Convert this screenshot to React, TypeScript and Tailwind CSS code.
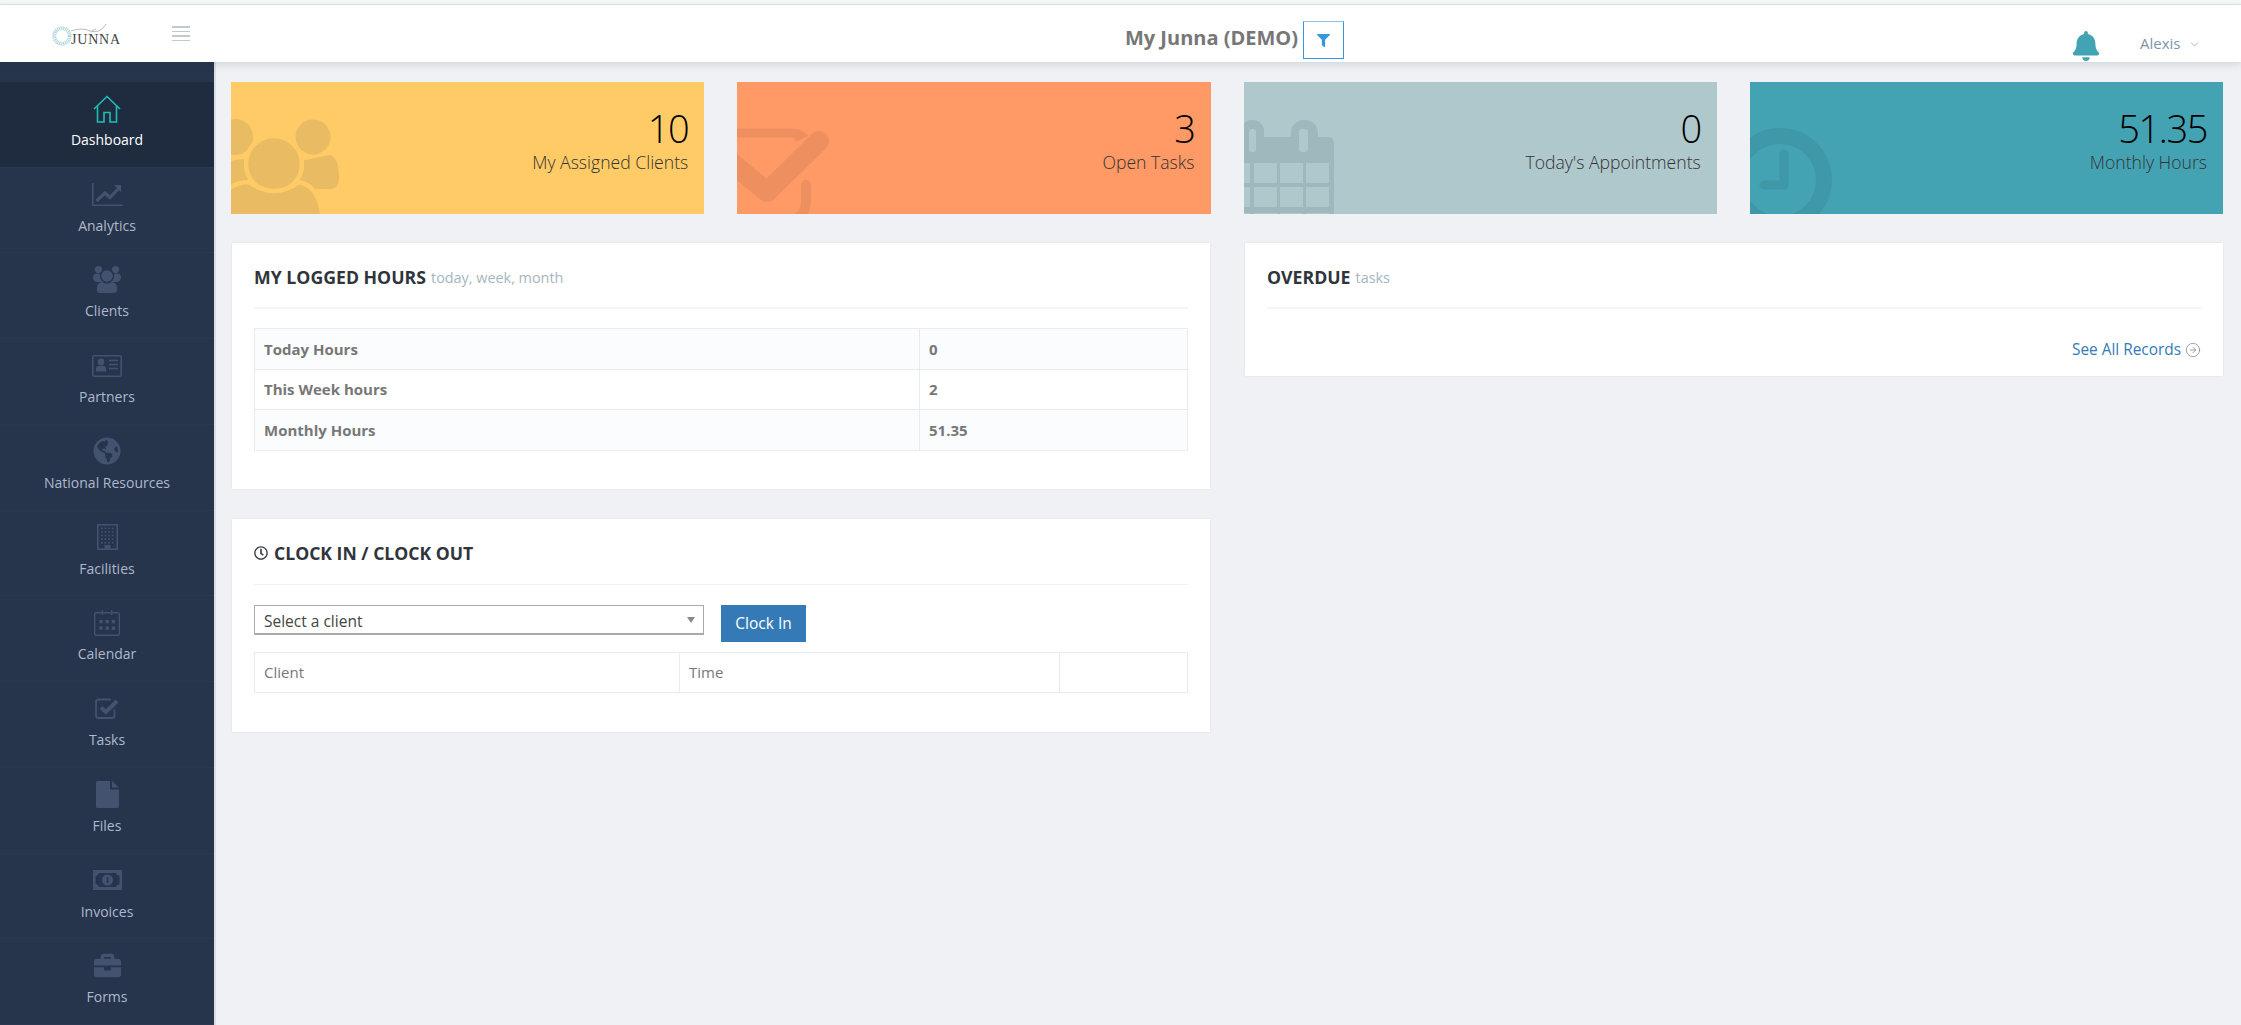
import React from 'react';
import { FaBell, FaBriefcase, FaFilter, FaGlobeAmericas, FaRegClock } from 'react-icons/fa';
import { ChevronDown, CircleArrowRight } from 'lucide-react';

const HomeIcon = () => (
  <svg width="28" height="28" viewBox="0 0 28 28" fill="none" stroke="#1fbcb6" strokeWidth="1.6">
    <path d="M1 14 L14 1.5 L27 14" />
    <path d="M4.5 11 V27 H11 V17.5 H17 V27 H23.5 V11" />
  </svg>
);

const ChartIcon = () => (
  <svg width="31" height="23" viewBox="0 0 31 23" fill="none" stroke="#43526e">
    <path d="M0.8 0 V22.2 H30.5" strokeWidth="1.6" />
    <path d="M4.5 18 L13 10 L18 14.5 L26.5 5.5" strokeWidth="3.2" />
    <path d="M22 2 H29 V9 Z" fill="#43526e" stroke="none" />
  </svg>
);

const UsersIcon = () => (
  <svg width="28" height="27" viewBox="0 0 28 27" fill="#43526e">
    <circle cx="5.5" cy="3.6" r="3.6" />
    <circle cx="22.5" cy="3.6" r="3.6" />
    <circle cx="4" cy="11.5" r="4" />
    <circle cx="24" cy="11.5" r="4" />
    <rect x="2" y="11" width="24" height="5" rx="2.5" />
    <circle cx="14" cy="10" r="6.5" stroke="#26344c" strokeWidth="1.4" />
    <path d="M4 22 Q4 16.5 9.5 16 Q14 19 18.5 16 Q24 16.5 24 22 V24 Q24 27 21 27 H7 Q4 27 4 24 Z" />
  </svg>
);

const CardIcon = () => (
  <svg width="30" height="22" viewBox="0 0 30 22" fill="#43526e">
    <rect x="0.8" y="0.8" width="28.4" height="20.4" rx="1.5" fill="none" stroke="#43526e" strokeWidth="1.6" />
    <circle cx="9" cy="7" r="3.4" />
    <path d="M4 16.5 V13.5 Q4 11 6.5 11 H11.5 Q14 11 14 13.5 V16.5 Z" />
    <path d="M17 5.5 H26 M17 9.5 H26 M17 13.5 H26" stroke="#43526e" strokeWidth="1.4" />
  </svg>
);

const BuildingIcon = () => {
  const dots = [];
  for (let r = 0; r < 5; r++) {
    for (let c = 0; c < 4; c++) {
      dots.push(<rect key={`${r}-${c}`} x={4 + c * 3.6} y={3.5 + r * 3.6} width="1.7" height="1.7" />);
    }
  }
  return (
    <svg width="21" height="26" viewBox="0 0 21 26" fill="#43526e">
      <rect x="0.8" y="0.8" width="19.4" height="24.4" fill="none" stroke="#43526e" strokeWidth="1.6" />
      {dots}
      <rect x="7.5" y="21" width="6" height="4.5" />
    </svg>
  );
};

const CalendarIcon = () => {
  const dots = [];
  for (let r = 0; r < 2; r++) {
    for (let c = 0; c < 3; c++) {
      dots.push(<rect key={`${r}-${c}`} x={5.3 + c * 6.2} y={10 + r * 6.4} width="3.4" height="3.4" />);
    }
  }
  return (
    <svg width="26" height="26" viewBox="0 0 26 26" fill="#43526e">
      <rect x="0.7" y="2.7" width="24.6" height="22.6" rx="1.5" fill="none" stroke="#43526e" strokeWidth="1.4" />
      <path d="M8.3 0 V5 M17.7 0 V5" stroke="#43526e" strokeWidth="1.2" />
      {dots}
    </svg>
  );
};

const TasksIcon = () => (
  <svg width="25" height="21" viewBox="0 0 25 21" fill="none" stroke="#43526e">
    <path d="M19.5 11.5 V17.5 Q19.5 20 17 20 H3.5 Q1 20 1 17.5 V4 Q1 1.5 3.5 1.5 H16" strokeWidth="1.8" />
    <path d="M6 9.5 L11 14 L22 3" strokeWidth="4" />
  </svg>
);

const FileIcon = () => (
  <svg width="23" height="27" viewBox="0 0 23 27" fill="#43526e">
    <path d="M1.5 0 H14 V8.5 H23 V25.5 Q23 27 21.5 27 H1.5 Q0 27 0 25.5 V1.5 Q0 0 1.5 0 Z" />
    <path d="M16 0 L23 6.5 H16 Z" />
  </svg>
);

const MoneyIcon = () => (
  <svg width="29" height="20" viewBox="0 0 29 20" fill="#43526e">
    <rect width="29" height="20" />
    <path d="M6 3 H23 Q23.5 5.5 26.5 6 V14 Q23.5 14.5 23 17 H6 Q5.5 14.5 2.5 14 V6 Q5.5 5.5 6 3 Z" fill="#26344c" />
    <circle cx="14.5" cy="10" r="5.5" />
    <rect x="13.8" y="7" width="1.6" height="6" fill="#26344c" />
  </svg>
);

const BigUsers = () => (
  <svg className="absolute left-0 top-0" width="120" height="132" viewBox="0 0 120 132" fill="#e9bb62" stroke="#ffcb66">
    <circle cx="4" cy="55" r="18" stroke="none" />
    <circle cx="82" cy="55" r="17.5" stroke="none" />
    <path d="M65 80 Q80 77 98 73 Q108 74 108 97 Q108 107 98 107 H60 Z" stroke="none" />
    <path d="M-20 90 Q0 74 20 78 L40 100 L-20 110 Z" stroke="none" />
    <circle cx="43" cy="82" r="28" strokeWidth="4.5" />
    <path d="M-15 140 V118 Q0 100 18 100 Q43 118 68 100 Q90 104 92 140 Z" strokeWidth="4.5" />
  </svg>
);

const BigCheck = () => (
  <svg className="absolute left-0 top-0" width="120" height="132" viewBox="0 0 120 132" fill="none" stroke="#ee8f60">
    <path d="M-6 51 H50 Q60 51 63 53 L57 56" strokeWidth="9" />
    <path d="M-5 81 L30 110 L82 59" strokeWidth="20" strokeLinejoin="round" strokeLinecap="round" />
    <path d="M69 103 V120 Q69 136 50 140" strokeWidth="10" strokeLinecap="round" />
  </svg>
);

const BigCalendar = () => {
  const xs = [-20, 10, 36, 62];
  const ys = [81, 105, 131];
  return (
    <svg className="absolute left-0 top-0" width="120" height="132" viewBox="0 0 120 132" fill="#9fb8bd">
      <path d="M-10 55 H84 Q90 55 90 62 V132 H-10 Z" />
      <rect x="-3" y="38" width="23" height="36" rx="11" />
      <rect x="47" y="38" width="27" height="36" rx="13" />
      <rect x="5" y="47" width="7" height="23" rx="3" fill="#afc8cc" />
      <rect x="55" y="47" width="9" height="23" rx="3" fill="#afc8cc" />
      {ys.map((y) =>
        xs.map((x) => <rect key={`${x}-${y}`} x={x} y={y} width={x === -20 ? 26 : 23} height="20" fill="#afc8cc" />)
      )}
    </svg>
  );
};

const BigClock = () => (
  <svg className="absolute left-0 top-0" width="120" height="132" viewBox="0 0 120 132" fill="none">
    <circle cx="30" cy="98" r="44" stroke="#3f98a8" strokeWidth="16" />
    <path d="M14 103 H34 V72" stroke="#3f98a8" strokeWidth="9" strokeLinejoin="round" strokeLinecap="round" />
  </svg>
);

const Logo = () => (
  <div className="relative ml-[52px] mt-[5px] flex w-[120px] items-center">
    <svg width="20" height="20" viewBox="0 0 20 20" fill="none" stroke="#b5d9dd">
      <circle cx="10" cy="10" r="7.5" strokeWidth="3.6" strokeDasharray="1.2 0.7" />
      <circle cx="10" cy="10" r="9.3" strokeWidth="1.2" strokeDasharray="0.8 1.2" />
    </svg>
    <span className="ml-[-1px] mt-[8px] font-['Liberation_Serif',serif] text-[14px] leading-none tracking-[0.8px] text-[#444]">
      JUNNA
    </span>
    <svg className="absolute left-[18px] top-[-1px]" width="38" height="10" viewBox="0 0 38 10" fill="none" stroke="#777" strokeWidth="0.5">
      <path d="M1 7 Q12 3 20 7 Q30 10 36 0 M26 5 L22 7" />
    </svg>
  </div>
);

const navItems = [
  { label: 'Dashboard', icon: <HomeIcon />, active: true },
  { label: 'Analytics', icon: <ChartIcon /> },
  { label: 'Clients', icon: <UsersIcon /> },
  { label: 'Partners', icon: <CardIcon /> },
  { label: 'National Resources', icon: <FaGlobeAmericas size={28} color="#43526e" /> },
  { label: 'Facilities', icon: <BuildingIcon /> },
  { label: 'Calendar', icon: <CalendarIcon /> },
  { label: 'Tasks', icon: <TasksIcon /> },
  { label: 'Files', icon: <FileIcon /> },
  { label: 'Invoices', icon: <MoneyIcon /> },
  { label: 'Forms', icon: <FaBriefcase size={27} color="#43526e" /> },
];

const stats = [
  { value: '10', label: 'My Assigned Clients', bg: 'bg-[#ffcb66]', icon: <BigUsers /> },
  { value: '3', label: 'Open Tasks', bg: 'bg-[#ff9966]', icon: <BigCheck /> },
  { value: '0', label: "Today's Appointments", bg: 'bg-[#afc8cc]', icon: <BigCalendar /> },
  { value: '51.35', label: 'Monthly Hours', bg: 'bg-[#43a3b3]', icon: <BigClock /> },
];

const hours = [
  ['Today Hours', '0'],
  ['This Week hours', '2'],
  ['Monthly Hours', '51.35'],
];

export default function App() {
  return (
    <div className="flex h-[1025px] w-full flex-col overflow-hidden bg-[#eff1f5] font-['Open_Sans',sans-serif]">
      <div className="h-[5px] shrink-0 border-b border-[#d8ebe6] bg-[#f3faf8]" />

      {/* top bar */}
      <header className="relative z-10 flex h-[57px] shrink-0 items-center bg-white shadow-[0_2px_8px_rgba(40,50,70,0.16)]">
        <div className="flex w-[398px] items-center">
          <Logo />
          <div className="flex h-[15px] w-[18px] flex-col justify-between">
            <div className="h-[1.5px] bg-[#c3c7cf]" />
            <div className="h-[1.5px] bg-[#c3c7cf]" />
            <div className="h-[1.5px] bg-[#c3c7cf]" />
            <div className="h-[1.5px] bg-[#c3c7cf]" />
          </div>
        </div>
        <div className="mt-[9px] flex flex-1 items-center justify-center">
          <span className="text-[20px] font-bold leading-none text-[#777]">My Junna (DEMO)</span>
          <div className="ml-[5px] mt-[4px] flex h-[38px] w-[41px] items-center justify-center border border-[#3598dc] border-t-[#8fc5ea]">
            <FaFilter size={13} color="#3598dc" />
          </div>
        </div>
        <div className="flex w-[170px] items-center">
          <FaBell size={30} color="#42a3b3" className="mt-[24px]" />
          <span className="ml-[39px] mt-[20px] text-[15px] text-[#8093ab]">Alexis</span>
          <ChevronDown size={13} strokeWidth={1.2} color="#8093ab" className="ml-[8px] mt-[21px]" />
        </div>
      </header>

      <div className="flex min-h-0 flex-1">
        {/* sidebar */}
        <aside className="flex w-[216px] shrink-0 flex-col border-r-2 border-[#d9dfe9] bg-[#26344c] pt-[20px]">
          {navItems.map((item) => (
            <div
              key={item.label}
              className={`flex flex-1 flex-col items-center border-b border-[#2a3852] pt-[12px] ${item.active ? 'bg-[#1f2c3f]' : ''}`}
            >
              <div className="flex h-[29px] items-center justify-center">{item.icon}</div>
              <span className={`mt-[6px] text-[14px] font-normal leading-[22px] ${item.active ? 'text-white' : 'text-[#aeb9cc]'}`}>
                {item.label}
              </span>
            </div>
          ))}
        </aside>

        <main className="min-w-0 flex-1 pl-[15px] pr-[18px] pt-[20px]">
          {/* stat cards */}
          <div className="grid grid-cols-4 gap-[33px]">
            {stats.map((s) => (
              <div key={s.label} className={`relative h-[132px] overflow-hidden pr-[16px] pt-[22px] text-right ${s.bg}`}>
                {s.icon}
                <div className="relative text-[38px] font-light leading-[48px] tracking-[-1.4px] text-black">{s.value}</div>
                <div className="relative mt-[-2px] text-[17.6px] font-light leading-[24px] text-[#333]">{s.label}</div>
              </div>
            ))}
          </div>

          <div className="mt-[29px] grid grid-cols-2 items-start gap-[35px] pl-px">
            <div className="flex flex-col gap-[30px]">
              {/* logged hours */}
              <section className="bg-white px-[22px] pb-[38px] pt-[20px] shadow-[0_0_2px_rgba(40,50,70,0.1)]">
                <div className="flex h-[46px] items-start border-b-2 border-[#f4f5f7]">
                  <h2 className="text-[17.7px] font-bold leading-[28px] text-[#2f353b]">MY LOGGED HOURS</h2>
                  <span className="ml-[5px] mt-[1px] text-[14.4px] leading-[28px] text-[#a6b5c0]">today, week, month</span>
                </div>
                <table className="mt-[19px] w-full table-fixed border-collapse text-[15px] font-bold text-[#777]">
                  <tbody>
                    {hours.map(([k, v], i) => (
                      <tr key={k} className={`h-[40.7px] ${i % 2 === 0 ? 'bg-[#fbfcfd]' : 'bg-white'}`}>
                        <td className="w-[665px] border border-[#e7ecf1] px-[9px]">{k}</td>
                        <td className="border border-[#e7ecf1] px-[9px]">{v}</td>
                      </tr>
                    ))}
                  </tbody>
                </table>
              </section>

              {/* clock in */}
              <section className="bg-white px-[22px] pb-[39px] pt-[20px] shadow-[0_0_2px_rgba(40,50,70,0.1)]">
                <div className="flex h-[46px] items-start border-b border-[#eef0f3]">
                  <FaRegClock size={14} color="#2f353b" className="mt-[7px]" />
                  <h2 className="ml-[6px] text-[17.6px] font-bold leading-[28px] text-[#2f353b]">CLOCK IN / CLOCK OUT</h2>
                </div>
                <div className="mt-[20px] flex items-start">
                  <div className="flex h-[30px] w-[450px] items-center justify-between border border-b-2 border-[#aaa] pl-[9px] pr-[8px] text-[15.5px] leading-[30px] text-[#444]">
                    <span className="mt-[2px]">Select a client</span>
                    <span className="h-0 w-0 border-x-[4px] border-t-[6px] border-x-transparent border-t-[#888]" />
                  </div>
                  <button className="ml-[17px] h-[37px] w-[85px] bg-[#337ab7] text-[15.5px] text-white">Clock In</button>
                </div>
                <table className="mt-[10px] w-full table-fixed border-collapse text-[15px] font-medium text-[#777]">
                  <tbody>
                    <tr className="h-[40px]">
                      <td className="w-[425px] border border-[#e7ecf1] px-[9px]">Client</td>
                      <td className="w-[380px] border border-[#e7ecf1] px-[9px]">Time</td>
                      <td className="border border-[#e7ecf1] px-[9px]" />
                    </tr>
                  </tbody>
                </table>
              </section>
            </div>

            {/* overdue */}
            <section className="bg-white px-[22px] pb-[15px] pt-[20px] shadow-[0_0_2px_rgba(40,50,70,0.1)]">
              <div className="flex h-[46px] items-start border-b-2 border-[#f4f5f7]">
                <h2 className="text-[17.7px] font-bold leading-[28px] text-[#2f353b]">OVERDUE</h2>
                <span className="ml-[5px] mt-[1px] text-[14.4px] leading-[28px] text-[#a6b5c0]">tasks</span>
              </div>
              <div className="mt-[30px] flex h-[22px] items-center justify-end text-[15.4px] text-[#337ab7]">
                See All Records
                <CircleArrowRight size={16} strokeWidth={1} color="#777" className="ml-[4px]" />
              </div>
            </section>
          </div>
        </main>
      </div>
    </div>
  );
}
